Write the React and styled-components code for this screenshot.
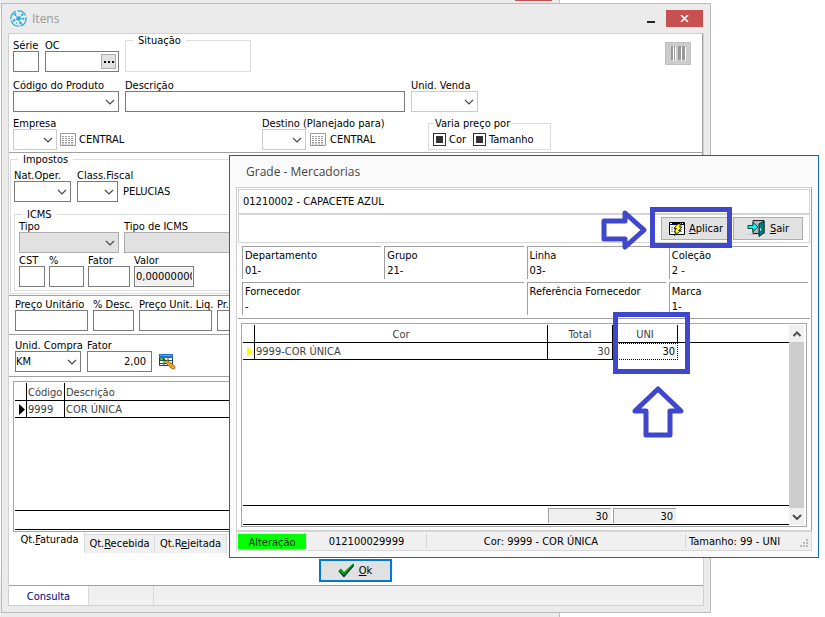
import React from 'react';
import styled, { createGlobalStyle, css } from 'styled-components';

const GlobalStyle = createGlobalStyle`
  * {
    box-sizing: border-box;
  }

  body {
    margin: 0;
    background: #FFF;
  }

  body, button, input, select, table {
    font-family: 'DejaVu Sans Condensed', 'Noto Sans', sans-serif;
    font-size: 11px;
    line-height: 12px;
    color: #000;
  }

  button, input, select {
    margin: 0;
    border-radius: 0;
    outline: none;
  }
`;

const Desktop = styled.div`
  position: relative;
  height: 100vh;
  min-height: 560px;
  overflow: hidden;
  white-space: nowrap;
`;

const BackWindow = styled.div`
  position: absolute;
  inset: 0 265px 0 0;
  border-right: 1px solid #BBB;
  background: linear-gradient(#EBEBEB 9px, #FFF 9px, #FFF 560px, #EBEBEB 600px);
`;

const BackClose = styled.div`
  width: 37px;
  height: 1px;
  margin: 0 7px 0 auto;
  background: #C75050;
`;

const Window = styled.section`
  position: absolute;
  display: flex;
  flex-direction: column;
  padding: 0 6px 6px;
`;

const ItemsWindow = styled(Window)`
  inset: 3px 114px 4px 1px;
  border: 1px solid #BBB;
  background: #EBEBEB;
`;

const GradeWindow = styled(Window)`
  inset: 155px 6px 59px 229px;
  border: 1px solid #0A6CBD;
  border-top-color: #2A579A;
  background: #FAFAFA;
`;

const TitleBar = styled.header`
  display: flex;
  align-items: center;
  flex: none;
  height: ${props => props.height}px;
  padding-left: 2px;
`;

const Title = styled.h1`
  flex: 1;
  margin: 0 0 0 ${props => props.indent}px;
  font-family: 'Open Sans', 'Noto Sans', sans-serif;
  font-size: 12px;
  font-weight: 400;
  color: ${props => props.color};
`;

const Minimize = styled.button`
  width: 8px;
  height: 8px;
  margin-right: 11px;
  padding: 0;
  border: 0;
  border-bottom: 2px solid #222;
  background: none;
`;

const Close = styled.button`
  display: flex;
  align-items: center;
  justify-content: center;
  width: 37px;
  height: 17px;
  margin-right: 1px;
  padding: 0;
  border: 0;
  background: #C75050;
`;

const Panel = styled.div`
  display: flex;
  flex-direction: column;
  flex: 1;
  min-height: 0;
  border: 1px solid #D0D0D0;
  background: #FFF;
`;

const Section = styled.div`
  flex: none;
  padding: ${props => props.pad};
  border-right: 1px solid #A0A0A0;
  border-bottom: 1px solid #A0A0A0;
`;

const Row = styled.div`
  display: flex;
  align-items: flex-end;
  gap: ${props => props.gap || 6}px;
  margin-top: ${props => props.top || 0}px;
`;

const FieldBox = styled.div`
  display: flex;
  flex-direction: column;
  flex: ${props => (props.width ? `0 0 ${props.width}px` : '1')};
  min-width: 0;

  > label {
    height: 12px;
    line-height: 14px;
  }
`;

const Line = styled.div`
  display: flex;
  align-items: center;
  gap: ${props => props.gap || 3}px;
`;

const Input = styled.input`
  width: ${props => (props.width ? `${props.width}px` : '100%')};
  min-width: 0;
  height: 21px;
  padding: 0 5px 0 2px;
  border: 1px solid #7A7A7A;
  background: #FFF;
  text-align: ${props => props.$align || 'left'};

  &:read-only {
    padding: 0 1px;
    background: #F0F0F0;
    box-shadow: inset 0 0 0 1px #FFF;
  }
`;

const InputGroup = styled.div`
  display: flex;
  align-items: center;
  height: 21px;
  padding-right: 2px;
  border: 1px solid #7A7A7A;

  input {
    flex: 1;
    height: 19px;
    border: 0;
  }
`;

const Dots = styled.button`
  display: flex;
  align-items: center;
  justify-content: center;
  flex: none;
  width: 15px;
  height: 15px;
  padding: 0;
  border: 1px solid #ADADAD;
  background: #E1E1E1;
`;

const ComboBox = styled.span`
  display: grid;
  flex: none;
  align-items: center;
  width: ${props => (props.width ? `${props.width}px` : '100%')};
  height: 21px;
  border: 1px solid ${props => props.border};
  background: ${props => props.fill};

  select, svg {
    grid-area: 1 / 1;
  }

  select {
    width: 100%;
    height: 19px;
    padding: 0 16px 0 0;
    border: 0;
    background: none;
    appearance: none;
  }

  svg {
    justify-self: end;
    margin-right: 3px;
    pointer-events: none;
  }
`;

const Group = styled.fieldset`
  min-width: 0;
  width: ${props => (props.width ? `${props.width}px` : 'auto')};
  height: ${props => (props.height ? `${props.height}px` : 'auto')};
  margin: ${props => props.$margin || 0};
  padding: ${props => props.pad || 0};
  border: 1px solid #DCDCDC;

  legend {
    height: 12px;
    margin-left: ${props => props.indent || 0}px;
    padding: 0 ${props => (props.tight ? 1 : 5)}px;
    line-height: 14px;
  }
`;

const CheckLabel = styled.label`
  display: flex;
  align-items: center;
  gap: 3px;
  margin-right: 4px;

  input {
    width: 13px;
    height: 13px;
    border: 1px solid #333;
    background: #FFF;
    appearance: none;
  }

  input:checked {
    background: #333;
    box-shadow: inset 0 0 0 2px #FFF;
  }
`;

const BarcodeButton = styled.button`
  display: flex;
  align-items: center;
  justify-content: center;
  align-self: flex-start;
  width: 26px;
  height: 23px;
  margin: 8px 7px 0 auto;
  padding: 0;
  border: 1px solid #BFBFBF;
  background: #CCC;
`;

const GridBox = styled.div`
  display: flex;
  flex: 1;
  min-height: 0;
  margin: ${props => props.$margin};
  padding: 1px 2px 1px 1px;
  border: 1px solid #A5A5AA;
`;

const GridBody = styled.div`
  display: flex;
  flex-direction: column;
  flex: 1;
  min-width: 0;
`;

const Table = styled.table`
  width: 100%;
  table-layout: fixed;
  border-spacing: 0;
  border-collapse: separate;

  th, td {
    height: ${props => props.rowHeight}px;
    padding: 1px 1px 0;
    border-right: 1px solid #000;
    border-bottom: 1px solid #000;
    font-weight: 400;
    color: #404040;
  }

  th {
    height: 18px;
    padding-top: 2px;
    text-align: ${props => props.headAlign};
  }

  th:last-child, td:last-child {
    border-right: 0;
  }

  th:first-child, td:first-child {
    padding: 0 1px;
    text-align: right;
  }

  svg {
    display: block;
    margin-left: auto;
  }
`;

const NumberCell = styled.td`
  && {
    padding-right: 2px;
    text-align: right;
  }
`;

const FocusCell = styled(NumberCell)`
  && {
    border: 1px dotted #000;
    color: #000;
  }
`;

const BlankCell = styled.td`
  && {
    border: 0;
  }
`;

const GridFooter = styled.div`
  display: flex;
  align-items: center;
  height: 20px;
  margin-top: auto;
  padding-right: 111px;
  border: solid #000;
  border-width: 1px 0;
`;

const Sum = styled.div`
  width: 63px;
  height: 15px;
  margin-right: 2px;
  padding: 2px 3px 0 0;
  border: solid #A0A0A0;
  border-width: 1px 0 0 1px;
  background: #F0F0F0;
  text-align: right;

  &:first-child {
    margin-left: auto;
  }
`;

const ScrollBar = styled.div`
  display: flex;
  flex-direction: column;
  flex: none;
  width: 15px;
  background: #CDCDCD;

  button {
    display: flex;
    align-items: center;
    justify-content: center;
    height: 17px;
    padding: 0;
    border: 0;
    background: #F0F0F0;
  }

  button:last-child {
    margin-top: auto;
  }
`;

const Tabs = styled.div`
  display: flex;
  flex: none;
  align-items: flex-end;
  height: 21px;
`;

const Tab = styled.button`
  width: ${props => props.width}px;
  height: 19px;
  padding: 0;
  border: solid #DADADA;
  border-width: 1px 1px 0 0;
  background: #F0F0F0;

  ${props => props.active && css`
    height: 21px;
    padding: 0 0 6px 6px;
    border-top: 0;
    background: #FFF;
  `}
`;

const Actions = styled.div`
  display: flex;
  justify-content: center;
  flex: none;
  padding: 6px 2px 3px 0;
  border-bottom: 1px solid #A0A0A0;
`;

const Button = styled.button`
  display: flex;
  align-items: center;
  justify-content: center;
  gap: 4px;
  width: ${props => props.width}px;
  height: 23px;
  padding: 0;
  border: ${props => (props.primary ? '2px solid #0078D7' : '1px solid #ADADAD')};
  background: #E1E1E1;
`;

const StatusBar = styled.footer`
  display: flex;
  flex: none;
  height: ${props => props.height}px;
  background: #F0F0F0;

  ${props => props.bordered && css`
    padding: 2px 1px 1px;
    border: 1px solid #D8D8D8;
  `}
`;

const StatusCell = styled.div`
  display: flex;
  align-items: center;
  justify-content: center;
  flex: ${props => (props.width ? `0 0 ${props.width}px` : '1')};
  padding: ${props => (props.low ? 3 : 0)}px ${props => props.shift || 0}px 0 0;
  border-right: 1px solid #D8D8D8;
  background: ${props => props.fill || 'none'};
  color: ${props => props.color || '#000'};

  &:last-child {
    justify-content: space-between;
    padding-left: 3px;
    border-right: 0;
  }

  svg {
    align-self: flex-end;
  }
`;

const Strip = styled.div`
  display: flex;
  align-items: center;
  justify-content: ${props => (props.end ? 'flex-end' : 'flex-start')};
  gap: 2px;
  flex: none;
  height: ${props => props.height}px;
  padding: 0 6px 0 4px;
  border: 1px solid #D4D4D4;
`;

const InfoGrid = styled.div`
  display: grid;
  flex: none;
  grid-template-columns: repeat(4, 1fr);
  grid-auto-rows: 33px;
  gap: 3px;
  padding: 3px 2px 3px 4px;
  border-bottom: 1px solid #A0A0A0;
`;

const Info = styled.div`
  grid-column: span ${props => props.span || 1};
  padding: 1px 2px;
  border: solid #A0A0A0;
  border-width: 1px 0 0 1px;
  line-height: 15px;
`;

const Highlight = styled.div`
  position: absolute;
  left: ${props => props.x}px;
  top: ${props => props.y}px;
  width: ${props => props.width}px;
  height: ${props => props.height}px;
  border: 5px solid #3F48CC;
  pointer-events: none;
`;

const Arrow = styled.svg`
  position: absolute;
  left: ${props => props.x}px;
  top: ${props => props.y}px;
  fill: #FFF;
  stroke: #3F48CC;
  stroke-width: 5;
  stroke-linejoin: round;
`;

const Chevron = ({ up, bold }) => (
  <svg width="10" height="6" viewBox="0 0 10 6" fill="none" stroke={bold ? '#505050' : '#444'} strokeWidth={bold ? 2 : 1.1}>
    <path d={up ? 'M1.5 5 5 1.5 8.5 5' : 'M1 1 5 5 9 1'} />
  </svg>
);

const CalendarIcon = () => (
  <svg width="16" height="13" viewBox="0 0 16 13">
    <path d="M.5.5h15v12H.5z" fill="#FFF" stroke="#999" />
    <path d="M2 3.5h12M2 5.5h12M2 7.5h12M2 9.5h12M2 11h12" stroke="#999" strokeDasharray="2 1" />
  </svg>
);

const LogoIcon = () => (
  <svg width="17" height="17" viewBox="0 0 17 17" fill="none" stroke="#29ABD6">
    <circle cx="8.5" cy="8.5" r="7.6" strokeWidth="1.3" strokeDasharray="10 1.5" />
    <path d="M8.5 8.5 5 4.5M8.5 8.5l4-4M8.5 8.5 4 10.5M8.5 8.5l2 4.500M8.5 8.5h5" strokeWidth=".8" />
    <g fill="#29ABD6" stroke="none">
      <circle cx="8.500" cy="8.500" r="2.200" />
      <circle cx="5" cy="4.500" r="1.300" />
      <circle cx="12.300" cy="4.600" r="1.200" />
      <circle cx="3.800" cy="10.500" r="1.200" />
      <circle cx="10.500" cy="13" r="1.300" />
      <circle cx="13.500" cy="9" r="1" />
      <circle cx="6.500" cy="13" r=".8" />
    </g>
  </svg>
);

const BarcodeIcon = () => (
  <svg width="16" height="15" viewBox="0 0 16 15">
    <path d="M3 1h1v14H3zM5 1h1v14H5zM11 1h1v14h-1zM15 1h1v14h-1z" fill="#FFF" />
    <path d="M1 0h2v14H1zM4 0h1v14H4zM8 0h3v14H8zM12 0h3v14h-3z" fill="#999" />
  </svg>
);

const GridEditIcon = () => (
  <svg width="17" height="16" viewBox="0 0 17 16">
    <path d="M.5 1.500h13v10H.5z" fill="#FFF" stroke="#123F6B" />
    <path d="M0 0h14v4H0z" fill="#1E6BD0" />
    <path d="M1 1h12v1H1z" fill="#62A5F0" />
    <path d="M1 4h4v3H1z" fill="#3DBB3D" />
    <path d="M1 6.500h12M1 9.500h12M5 4v8M9 4v8" stroke="#1B5B3C" />
    <path d="m6 6 2 .5 6 4 2 2-.5 2.500-3-.5-5-5z" fill="#F0A020" stroke="#8B5A10" strokeWidth=".8" />
    <path d="m4 4 3 3" stroke="#222" />
  </svg>
);

const ApplyIcon = () => (
  <svg width="16" height="14" viewBox="0 0 16 14">
    <path d="M.5.5h15v12H.5z" fill="#FFF" stroke="#000" />
    <path d="M1 1h14v2H1z" fill="#000080" />
    <path d="M1 1h2v1H1zM11 1h1v1h-1zM13 1h1v1h-1z" fill="#FFF" />
    <path d="M2 5.500h12M2 7.500h12M2 9.500h12" stroke="#999" strokeDasharray="2 1" />
    <path d="M8.500 2 5 6.500h2.500L5 10h2l-1.500 3.500L12 8.500H9.500L13 5h-2.500L12 2z" fill="#FF0" stroke="#000" strokeWidth=".8" />
  </svg>
);

const ExitIcon = () => (
  <svg width="19" height="17" viewBox="0 0 19 17">
    <path d="M6 .5h11v13H6z" fill="#B5B5B5" stroke="#222" />
    <path d="M1 14.500h11" stroke="#AAA" strokeDasharray="1 1" />
    <path d="M17 1v12l-5 3.500V4z" fill="#008080" stroke="#033" />
    <path d="M1 5.500h5v-3L11 7l-5 4.500v-3H1z" fill="#0FF" stroke="#044" />
    <path d="M13.500 8.500v2" stroke="#FFF" />
  </svg>
);

const CheckIcon = () => (
  <svg width="17" height="15" viewBox="0 0 17 15">
    <path d="M.5 8.500 3 6.500l3 3.500L15.500.5l.5 2.500-10 11.500z" fill="#002850" />
    <path d="M.5 7.500 3 5.500 6 9l9-8.500.5 1.500-9.500 10.500z" fill="#0A9A10" />
  </svg>
);

const RowPointer = ({ color }) => (
  <svg width="6" height="11" viewBox="0 0 6 11" fill={color}><path d="M0 0v11l6-5.500z" /></svg>
);

const Field = ({ id, label, width, ...rest }) => (
  <FieldBox width={width}>
    <label htmlFor={id}>{label}</label>
    <Input id={id} {...rest} />
  </FieldBox>
);

const Combo = ({ id, width, border = '#7A7A7A', fill = '#FFF', value = '' }) => (
  <ComboBox width={width} border={border} fill={fill}>
    <select id={id} defaultValue={value}><option>{value}</option></select>
    <Chevron />
  </ComboBox>
);

const ComboField = ({ id, label, width, comboWidth, gap, text, icon, ...rest }) => (
  <FieldBox width={width}>
    <label htmlFor={id}>{label}</label>
    <Line gap={gap}>
      <Combo id={id} width={comboWidth} {...rest} />
      {icon && <CalendarIcon />}
      {text}
    </Line>
  </FieldBox>
);

const infos = [
  { name: 'Departamento', value: '01-' },
  { name: 'Grupo', value: '21-' },
  { name: 'Linha', value: '03-' },
  { name: 'Coleção', value: '2 -' },
  { name: 'Fornecedor', value: '-', span: 2 },
  { name: 'Referência Fornecedor', value: '' },
  { name: 'Marca', value: '1-' },
];

const Items = () => (
  <ItemsWindow>
    <TitleBar height={29}>
      <LogoIcon />
      <Title indent={5} color="#999">Itens</Title>
      <Minimize aria-label="Minimizar" />
      <Close aria-label="Fechar">
        <svg width="9" height="7" viewBox="0 0 9 7" stroke="#FFF" strokeWidth="1.600"><path d="m1 0 7 7M8 0 1 7" /></svg>
      </Close>
    </TitleBar>
    <Panel>
      <Section pad="0 4px 2px">
        <Row>
          <Field id="serie" label="Série" width={26} />
          <FieldBox width={74}>
            <label htmlFor="oc">OC</label>
            <InputGroup>
              <Input id="oc" />
              <Dots aria-label="Procurar OC">
                <svg width="10" height="2"><path d="M0 0h2v2H0zM4 0h2v2H4zM8 0h2v2H8z" /></svg>
              </Dots>
            </InputGroup>
          </FieldBox>
          <Group width={126} height={38} indent={7}><legend>Situação</legend></Group>
          <BarcodeButton aria-label="Código de barras"><BarcodeIcon /></BarcodeButton>
        </Row>
        <Row top={7}>
          <ComboField id="produto" label="Código do Produto" width={106} />
          <Field id="descricao" label="Descrição" width={280} />
          <ComboField id="venda" label="Unid. Venda" width={67} border="#CCC" />
        </Row>
        <Row top={5}>
          <ComboField id="empresa" label="Empresa" width={243} comboWidth={44} border="#CCC" icon text="CENTRAL" />
          <ComboField id="destino" label="Destino (Planejado para)" width={160} comboWidth={44} border="#CCC" gap={4} icon text="CENTRAL" />
          <Group width={123} height={33} pad="4px 4px 0" indent={1} tight>
            <legend>Varia preço por</legend>
            <Line>
              <CheckLabel><input type="checkbox" defaultChecked />Cor</CheckLabel>
              <CheckLabel><input type="checkbox" defaultChecked />Tamanho</CheckLabel>
            </Line>
          </Group>
        </Row>
      </Section>
      <Section pad="0 1px 1px">
        <Group pad="4px 3px 2px" indent={4}>
          <legend>Impostos</legend>
          <Row>
            <ComboField id="oper" label="Nat.Oper." width={57} />
            <ComboField id="fiscal" label="Class.Fiscal" width={160} comboWidth={41} gap={5} text="PELUCIAS" />
          </Row>
          <Group $margin="6px 0 0" pad="0 4px 3px" indent={3}>
            <legend>ICMS</legend>
            <Row gap={5}>
              <ComboField id="tipo" label="Tipo" width={100} border="#ADADAD" fill="#E1E1E1" />
              <ComboField id="tipoicms" label="Tipo de ICMS" border="#ADADAD" fill="#E1E1E1" />
            </Row>
            <Row top={1} gap={4}>
              <Field id="cst" label="CST" width={26} />
              <Field id="pct" label="%" width={35} />
              <Field id="fatoricms" label="Fator" width={42} />
              <Field id="valor" label="Valor" width={60} readOnly value="0,000000000" />
            </Row>
          </Group>
        </Group>
      </Section>
      <Section pad="2px 6px 3px">
        <Row gap={5}>
          <Field id="unitario" label="Preço Unitário" width={73} />
          <Field id="desc" label="% Desc." width={41} />
          <Field id="liquido" label="Preço Unit. Liq." width={73} />
          <Field id="prazo" label="Pr." width={73} />
        </Row>
      </Section>
      <Section pad="4px 6px">
        <Row>
          <ComboField id="compra" label="Unid. Compra" width={66} value="KM" />
          <FieldBox width={120}>
            <label htmlFor="fator">Fator</label>
            <Line gap={7}>
              <Input id="fator" width={65} $align="right" defaultValue="2,00" />
              <GridEditIcon />
            </Line>
          </FieldBox>
        </Row>
      </Section>
      <GridBox $margin="4px 4px 0">
        <GridBody>
          <Table rowHeight={17} headAlign="left">
            <colgroup><col width="12" /><col width="38" /><col /></colgroup>
            <thead>
              <tr><th aria-label="Linha" /><th>Código</th><th>Descrição</th></tr>
            </thead>
            <tbody>
              <tr><td><RowPointer color="#000" /></td><td>9999</td><td>COR ÚNICA</td></tr>
            </tbody>
          </Table>
          <GridFooter />
        </GridBody>
      </GridBox>
      <Tabs role="tablist">
        <Tab role="tab" width={76} active>Qt.<u>F</u>aturada</Tab>
        <Tab role="tab" width={70}>Qt.<u>R</u>ecebida</Tab>
        <Tab role="tab" width={72}>Qt.R<u>e</u>jeitada</Tab>
      </Tabs>
      <Actions>
        <Button width={73} primary><CheckIcon /><span><u>O</u>k</span></Button>
      </Actions>
      <StatusBar height={19}>
        <StatusCell width={80} fill="#FFF" color="#000080" low>Consulta</StatusCell>
        <StatusCell width={65} />
        <StatusCell />
      </StatusBar>
    </Panel>
  </ItemsWindow>
);

const GradePanel = styled(Panel)`
  padding: 1px;
  border-right-color: #A0A0A0;
`;

const Grade = () => (
  <GradeWindow>
    <TitleBar height={31}>
      <Title indent={8} color="#444">Grade - Mercadorias</Title>
    </TitleBar>
    <GradePanel>
      <Strip height={25}>01210002 - CAPACETE AZUL</Strip>
      <Strip height={29} end>
        <Button width={70}><ApplyIcon /><span><u>A</u>plicar</span></Button>
        <Button width={70}><ExitIcon /><span><u>S</u>air</span></Button>
      </Strip>
      <InfoGrid>
        {infos.map(({ name, value, span }) => (
          <Info key={name} span={span}>
            {name}
            <br />
            {value}
          </Info>
        ))}
      </InfoGrid>
      <GridBox $margin="4px 3px 2px">
        <GridBody>
          <Table rowHeight={17} headAlign="center">
            <colgroup>
              <col width="12" /><col /><col width="65" /><col width="65" /><col width="111" />
            </colgroup>
            <thead>
              <tr><th aria-label="Linha" /><th>Cor</th><th>Total</th><th>UNI</th><th aria-label="Vazio" /></tr>
            </thead>
            <tbody>
              <tr>
                <td><RowPointer color="#FF0" /></td>
                <td>9999-COR ÚNICA</td>
                <NumberCell>30</NumberCell>
                <FocusCell>30</FocusCell>
                <BlankCell />
              </tr>
            </tbody>
          </Table>
          <GridFooter>
            <Sum>30</Sum>
            <Sum>30</Sum>
          </GridFooter>
        </GridBody>
        <ScrollBar>
          <button aria-label="Subir"><Chevron up bold /></button>
          <button aria-label="Descer"><Chevron bold /></button>
        </ScrollBar>
      </GridBox>
    </GradePanel>
    <StatusBar height={20} bordered>
      <StatusCell width={69} fill="#0F0" color="#222" low>Alteração</StatusCell>
      <StatusCell width={120}>012100029999</StatusCell>
      <StatusCell shift={30}>Cor: 9999 - COR ÚNICA</StatusCell>
      <StatusCell width={124}>
        Tamanho: 99 - UNI
        <svg width="10" height="10" fill="#BBB">
          <path d="M6 0h2v2H6zM3 3h2v2H3zM6 3h2v2H6zM0 6h2v2H0zM3 6h2v2H3zM6 6h2v2H6z" />
        </svg>
      </StatusCell>
    </StatusBar>
    <Arrow x={370} y={52} width="50" height="44">
      <path d="M4 13h21V5l19 17-19 17v-8H4z" />
    </Arrow>
    <Highlight x={420} y={51} width={82} height={41} />
    <Highlight x={383} y={156} width={77} height={62} />
    <Arrow x={400} y={227} width="58" height="56">
      <path d="M28 6 51 28H40v24H16V28H5z" />
    </Arrow>
  </GradeWindow>
);

export default function App() {
  return (
    <Desktop>
      <GlobalStyle />
      <BackWindow><BackClose /></BackWindow>
      <Items />
      <Grade />
    </Desktop>
  );
}
